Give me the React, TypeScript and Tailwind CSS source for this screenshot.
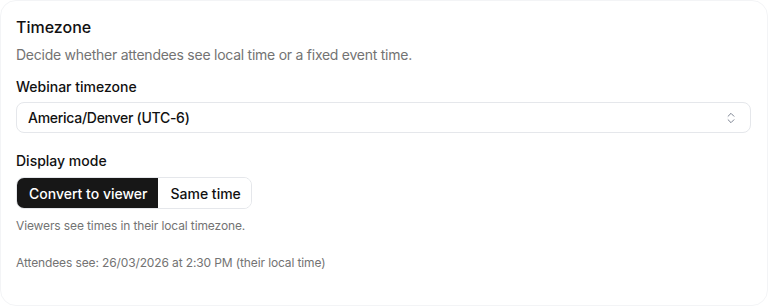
import { ChevronsUpDown } from "lucide-react"

export default function App() {
  return (
    <div className="h-[306px] w-[768px] bg-white" style={{ fontFamily: "Inter, 'Noto Sans', sans-serif" }}>
      <div className="flex h-full flex-col rounded-2xl border border-gray-100 px-[15px] pt-[14px]">
        <h2 className="text-[16px] font-medium leading-6 text-[#111]">Timezone</h2>
        <p className="mt-[6px] text-[14px] leading-5 tracking-[-0.018em] text-[#737373]">
          Decide whether attendees see local time or a fixed event time.
        </p>

        <label className="mt-[12px] text-[14px] font-medium leading-5 text-[#111]">Webinar timezone</label>
        <div className="mt-[5px] flex h-[31px] w-[735px] items-center justify-between rounded-lg border border-gray-200 pl-[11px] pr-[12px]">
          <span className="text-[14px] font-medium tracking-[-0.02em] text-[#111]">America/Denver (UTC-6)</span>
          <ChevronsUpDown className="h-[14px] w-[14px] text-gray-500" strokeWidth={1.5} />
        </div>

        <label className="mt-[18px] text-[14px] font-medium leading-5 text-[#111]">Display mode</label>
        <div className="mt-[6px] flex h-[32px] w-fit overflow-hidden rounded-lg border border-gray-200">
          <button className="bg-[#171717] pl-3 pr-[11px] text-[14px] font-medium text-white">Convert to viewer</button>
          <button className="bg-white pl-3 pr-[10px] text-[14px] font-medium text-[#111]">Same time</button>
        </div>

        <p className="mt-[9px] text-[12px] leading-4 tracking-[-0.01em] text-[#737373]">Viewers see times in their local timezone.</p>
        <p className="mt-[21px] text-[12px] leading-4 tracking-[-0.01em] text-[#737373]">
          Attendees see: 26/03/2026 at 2:30 PM (their local time)
        </p>
      </div>
    </div>
  )
}
